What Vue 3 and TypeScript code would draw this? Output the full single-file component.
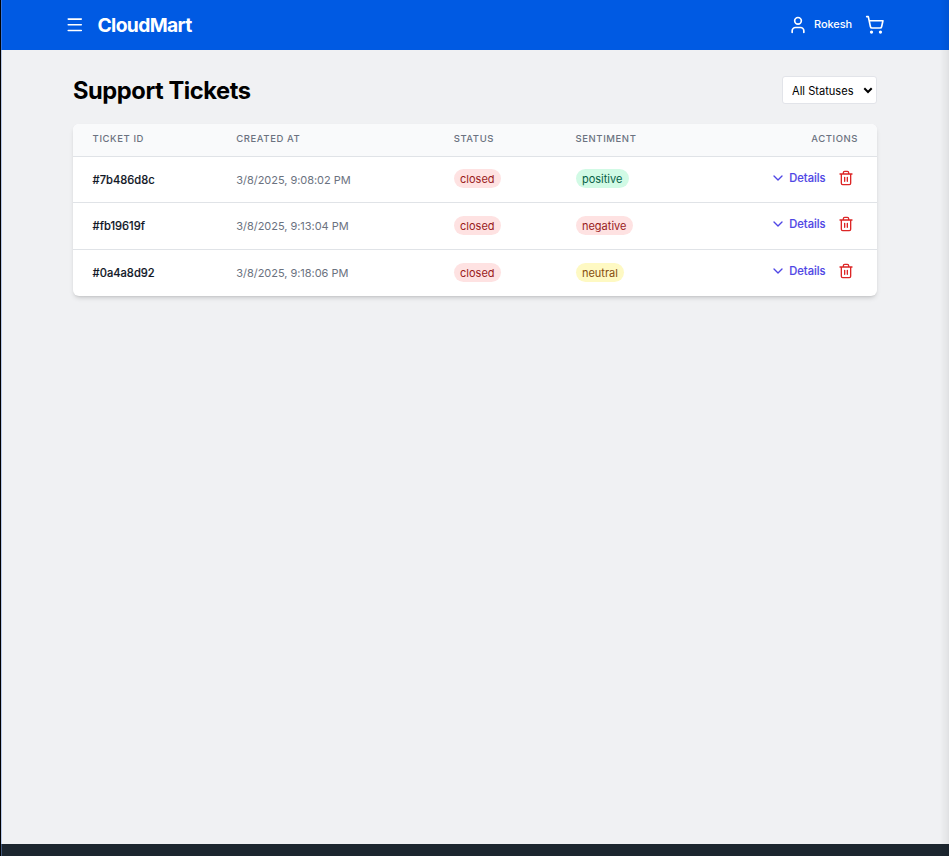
<script setup lang="ts">
import { ref } from 'vue'

interface Ticket {
  id: string
  createdAt: string
  status: string
  sentiment: 'positive' | 'negative' | 'neutral'
}

const statusFilter = ref('all')

const tickets: Ticket[] = [
  { id: '7b486d8c', createdAt: '3/8/2025, 9:08:02 PM', status: 'closed', sentiment: 'positive' },
  { id: 'fb19619f', createdAt: '3/8/2025, 9:13:04 PM', status: 'closed', sentiment: 'negative' },
  { id: '0a4a8d92', createdAt: '3/8/2025, 9:18:06 PM', status: 'closed', sentiment: 'neutral' },
]
</script>

<template>
  <div class="page">
    <header class="topbar">
      <div class="brand">
        <button class="icon-button" aria-label="Menu">
          <svg class="menu-icon" viewBox="0 0 24 24"><path d="M4 5h16M4 12h16M4 19h16" /></svg>
        </button>
        <span class="brand-name">CloudMart</span>
      </div>
      <div class="account">
        <svg class="user-icon" viewBox="0 0 24 24">
          <path d="M19 21v-2a4 4 0 0 0-4-4H9a4 4 0 0 0-4 4v2" />
          <circle cx="12" cy="7" r="4" />
        </svg>
        <span class="user-name">Rokesh</span>
        <svg class="cart-icon" viewBox="0 0 24 24">
          <circle cx="8" cy="21" r="1" />
          <circle cx="19" cy="21" r="1" />
          <path d="M2.05 2.05h2l2.66 12.42a2 2 0 0 0 2 1.58h9.78a2 2 0 0 0 1.95-1.57l1.65-7.43H5.12" />
        </svg>
      </div>
    </header>

    <main class="content">
      <div class="heading">
        <h1>Support Tickets</h1>
        <div class="filter">
          <select v-model="statusFilter" aria-label="Status">
            <option value="all">All Statuses</option>
            <option value="open">Open</option>
            <option value="closed">Closed</option>
          </select>
          <svg class="filter-arrow" viewBox="0 0 10 7"><path d="M1.3 1.3 5 5l3.7-3.7" /></svg>
        </div>
      </div>

      <section class="card">
        <div class="row head">
          <span>Ticket ID</span>
          <span>Created At</span>
          <span>Status</span>
          <span>Sentiment</span>
          <span class="right">Actions</span>
        </div>
        <div v-for="ticket in tickets" :key="ticket.id" class="row body">
          <span class="ticket-id">#{{ ticket.id }}</span>
          <span class="created">{{ ticket.createdAt }}</span>
          <span class="pill closed">{{ ticket.status }}</span>
          <span class="pill" :class="ticket.sentiment">{{ ticket.sentiment }}</span>
          <span class="actions">
            <button class="details">
              <svg class="chevron" viewBox="0 0 24 24"><path d="m6 9 6 6 6-6" /></svg>
              Details
            </button>
            <button class="delete" aria-label="Delete ticket">
              <svg class="trash" viewBox="0 0 24 24">
                <path d="M3 6h18M19 6v14a2 2 0 0 1-2 2H7a2 2 0 0 1-2-2V6M8 6V4a2 2 0 0 1 2-2h4a2 2 0 0 1 2 2v2M10 11v6M14 11v6" />
              </svg>
            </button>
          </span>
        </div>
      </section>
    </main>

    <footer class="footer"></footer>
    <div class="edge-left"></div>
    <div class="edge-right"></div>
  </div>
</template>

<style>
body {
  margin: 0;
}
</style>

<style scoped>
.page {
  position: relative;
  display: flex;
  flex-direction: column;
  height: 856px;
  overflow: hidden;
  box-sizing: border-box;
  background: #f0f1f3;
  font-family: Inter, 'Liberation Sans', sans-serif;
  font-size: 11px;
  color: #000;
}
.page * {
  box-sizing: border-box;
}
svg {
  display: block;
  fill: none;
  stroke: currentColor;
  stroke-width: 2;
  stroke-linecap: round;
  stroke-linejoin: round;
}
button {
  display: flex;
  align-items: center;
  padding: 0;
  border: 0;
  background: none;
  color: inherit;
  font: inherit;
}
.topbar {
  display: flex;
  flex: none;
  align-items: center;
  justify-content: space-between;
  height: 50px;
  padding: 0 65px 0 65px;
  background: #005ae3;
  color: #fff;
}
.brand,
.account {
  display: flex;
  align-items: center;
}
.menu-icon {
  width: 19.5px;
  height: 19.5px;
}
.brand-name {
  margin-left: 13px;
  font-size: 19.3px;
  font-weight: 700;
  letter-spacing: -0.65px;
}
.user-icon {
  width: 20px;
  height: 20px;
}
.user-name {
  margin: 0 12.5px 2px 6px;
  font-weight: 500;
  letter-spacing: -0.1px;
}
.cart-icon {
  width: 19.5px;
  height: 19.5px;
}
.content {
  flex: 1;
  padding: 26px 72px 0 73px;
}
.heading {
  display: flex;
  align-items: center;
  justify-content: space-between;
  height: 28px;
  margin-bottom: 20px;
}
h1 {
  margin: 0;
  padding-top: 1px;
  font-size: 23.7px;
  font-weight: 700;
  letter-spacing: -0.45px;
}
.filter {
  position: relative;
}
select {
  display: block;
  appearance: none;
  width: 95px;
  height: 28px;
  padding: 2px 9px 0;
  border: 1px solid #e2e4e9;
  border-radius: 3px;
  background: #fff;
  color: #000;
  font-family: inherit;
  font-size: 11.1px;
}
.filter-arrow {
  position: absolute;
  top: 11px;
  right: 4px;
  width: 10px;
  height: 7px;
  stroke-linecap: butt;
  stroke-linejoin: miter;
  pointer-events: none;
}
.card {
  overflow: hidden;
  border-radius: 6px;
  background: #fff;
  box-shadow: 0 3px 5px -1px rgb(0 0 0 / 14%), 0 2px 3px -2px rgb(0 0 0 / 14%);
}
.row {
  display: grid;
  grid-template-columns: 143.7px 217.4px 121.9px 1fr 120px;
  align-items: center;
  height: 47px;
  padding: 0 19.5px 0 19.6px;
}
.row.head {
  height: 32px;
  padding-bottom: 3px;
  background: #f9fafb;
  color: #6b7280;
  font-size: 9.5px;
  font-weight: 500;
  letter-spacing: 0.58px;
  text-transform: uppercase;
}
.row.body {
  border-top: 1px solid #e0e3e7;
}
.row.head + .row.body {
  height: 46px;
}
.right {
  margin-right: -0.6px;
  text-align: right;
}
.ticket-id {
  color: #111827;
  font-size: 11.15px;
  font-weight: 500;
  -webkit-text-stroke: 0.15px currentColor;
}
.created {
  color: #6b7280;
  letter-spacing: -0.04px;
}
.pill {
  justify-self: start;
  height: 19px;
  margin-bottom: 2px;
  padding: 0 6.4px;
  border-radius: 10px;
  line-height: 20px;
}
.closed,
.negative {
  background: #fee2e2;
  color: #991b1b;
}
.positive {
  background: #d1fae5;
  color: #065f46;
}
.neutral {
  background: #fef9c3;
  color: #854d0e;
}
.actions {
  display: flex;
  align-items: center;
  justify-content: flex-end;
  padding: 0 3.5px 4px 0;
}
.details {
  gap: 3px;
  color: #4f46e5;
  font-size: 11.1px;
  font-weight: 500;
  -webkit-text-stroke: 0.15px currentColor;
}
.chevron {
  width: 16px;
  height: 16px;
}
.delete {
  margin-left: 12.5px;
  color: #dc2626;
}
.trash {
  width: 16px;
  height: 16px;
}
.footer {
  flex: none;
  height: 12px;
  background: #1c262f;
}
.edge-left {
  position: absolute;
  inset: 0 auto 0 0;
  width: 2px;
  border-left: 1px solid #000;
  background: rgb(110 150 220 / 45%);
}
.edge-right {
  position: absolute;
  inset: 0 0 0 auto;
  width: 9px;
  border-right: 1px solid rgb(0 0 0 / 6%);
  background: linear-gradient(to right, rgb(0 0 0 / 0%), rgb(0 0 0 / 6%));
}
</style>
